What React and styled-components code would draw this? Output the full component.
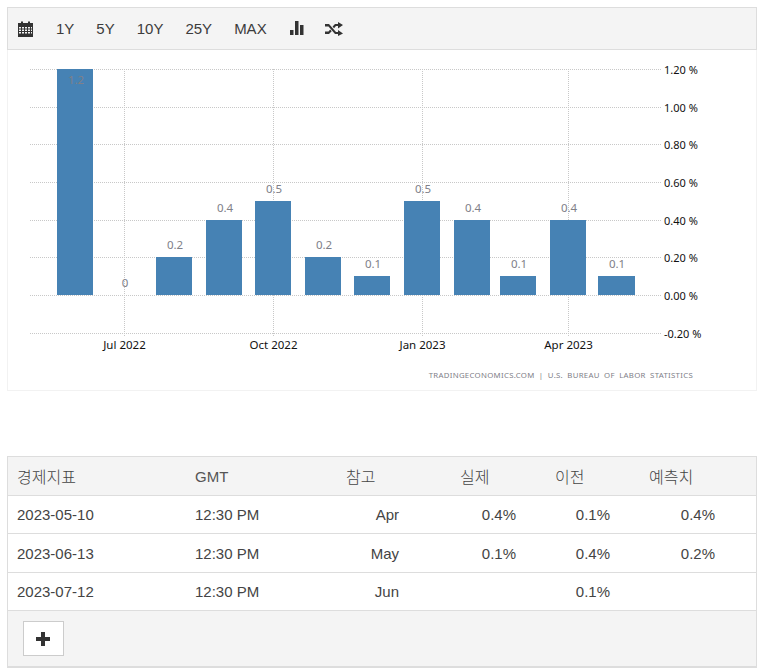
import React from "react";
import styled, { createGlobalStyle } from "styled-components";

const Global = createGlobalStyle`
  * { box-sizing: border-box; }
  html, body { margin: 0; padding: 0; background: #fff; }
  body {
    font-family: "Liberation Sans", "Noto Sans CJK KR", Arial, sans-serif;
    color: #333;
  }
`;

const Page = styled.div`
  width: 757px;
  padding: 7px 0 0 7px;
`;

const Toolbar = styled.div`
  display: flex;
  align-items: center;
  height: 43px;
  border: 1px solid #ddd;
  background: #f4f4f4;
  padding-left: 10px;
`;

const IconButton = styled.span`
  display: inline-flex;
  align-items: center;
  margin-right: ${(p) => p.$gap || 0}px;
  color: #333;
`;

const RangeButton = styled.span`
  font-size: 15px;
  color: #3c3c3c;
  margin-right: ${(p) => p.$gap}px;
`;

const ChartPanel = styled.div`
  height: 341px;
  border: 1px solid #f2f2f2;
  border-top: 0;
  margin-bottom: 65px;
`;

const ChartSvg = styled.svg`
  display: block;
  text {
    font-family: "Noto Sans", sans-serif;
  }
`;

const Table = styled.div`
  border: 1px solid #ddd;
  border-bottom-width: 2px;
`;

const Row = styled.div`
  display: grid;
  grid-template-columns: 178px 151px 114px 95px 94px 1fr;
  align-items: center;
  height: ${(p) => p.$h}px;
  padding-left: 9px;
  border-bottom: 1px solid #ddd;
  background: ${(p) => (p.$head ? "#f4f4f4" : "#fff")};
  font-size: 15px;
  color: #444;
`;

const Cell = styled.span`
  text-align: ${(p) => (p.$pr ? "right" : "left")};
  padding-right: ${(p) => p.$pr || 0}px;
`;

const Head = styled.span`
  font-size: 16px;
  font-family: "Noto Sans CJK KR", "Liberation Sans", sans-serif;
  font-weight: 300;
`;

const LatinHead = styled.span`
  font-size: 15px;
  color: #555;
`;

const Footer = styled.div`
  height: 55px;
  display: flex;
  align-items: center;
  padding-left: 15px;
  background: #f4f4f4;
`;

const PlusButton = styled.button`
  width: 41px;
  height: 35px;
  padding: 0 2px 0 0;
  display: flex;
  align-items: center;
  justify-content: center;
  background: #fff;
  border: 1px solid #ccc;
`;

const bars = [
  { x: 57, v: 1.2, label: "1.2" },
  { x: 106, v: 0, label: "0" },
  { x: 156, v: 0.2, label: "0.2" },
  { x: 206, v: 0.4, label: "0.4" },
  { x: 255, v: 0.5, label: "0.5" },
  { x: 305, v: 0.2, label: "0.2" },
  { x: 354, v: 0.1, label: "0.1" },
  { x: 404, v: 0.5, label: "0.5" },
  { x: 454, v: 0.4, label: "0.4" },
  { x: 500, v: 0.1, label: "0.1" },
  { x: 550, v: 0.4, label: "0.4" },
  { x: 598, v: 0.1, label: "0.1", w: 37 },
];

const ticks = [
  ["1.20 %", 69.5],
  ["1.00 %", 107.5],
  ["0.80 %", 144.5],
  ["0.60 %", 182.5],
  ["0.40 %", 220.5],
  ["0.20 %", 257.5],
  ["0.00 %", 295.5],
  ["-0.20 %", 333.5],
];

const months = [
  ["Jul 2022", 124.5],
  ["Oct 2022", 273.5],
  ["Jan 2023", 422.5],
  ["Apr 2023", 568.5],
];

const rows = [
  ["2023-05-10", "12:30 PM", "Apr", "0.4%", "0.1%", "0.4%"],
  ["2023-06-13", "12:30 PM", "May", "0.1%", "0.4%", "0.2%"],
  ["2023-07-12", "12:30 PM", "Jun", "", "0.1%", ""],
];

const Chart = () => (
  <ChartSvg width="748" height="340" viewBox="8 50 748 340">
    {ticks.map(([label, y]) => (
      <g key={label}>
        <line x1="30" x2="661" y1={y} y2={y} stroke="#c8c8c8" strokeDasharray="1 1" />
        <text x="664" y={y + 4} fontSize="11" fill="#111">{label}</text>
      </g>
    ))}
    {months.map(([label, x]) => (
      <g key={label}>
        <line x1={x} x2={x} y1="69" y2="337" stroke="#c8c8c8" strokeDasharray="1 1" />
        <text x={x} y="349" fontSize="11.5" fill="#111" textAnchor="middle">{label}</text>
      </g>
    ))}
    {bars.map((b) => {
      const top = Math.round(295 - b.v * 188.5);
      return (
        <g key={b.x}>
          <rect x={b.x} y={top} width={b.w || 36} height={295 - top} fill="#4682b4" />
          <text
            x={b.x + 19}
            y={b.v === 1.2 ? 84 : top - 8}
            fontSize="11.5"
            fill="#808088"
            textAnchor="middle"
          >
            {b.label}
          </text>
        </g>
      );
    })}
    <text x="693" y="378" fontSize="7.8" fill="#808088" textAnchor="end" letterSpacing="0.3" wordSpacing="2">
      TRADINGECONOMICS.COM | U.S. BUREAU OF LABOR STATISTICS
    </text>
  </ChartSvg>
);

const CalendarIcon = () => (
  <svg width="15" height="16" viewBox="0 0 15 16" fill="#333">
    <path d="M0 2h3V0.5h2V2h5V0.5h2V2h3v14H0z" />
    <path
      fill="#f4f4f4"
      d="M1 6h2v1.5H1zM4 6h2v1.5H4zM7 6h2v1.5H7zM10 6h2v1.5h-2zM13 6h1v1.5h-1zM1 8.5h2V10H1zM4 8.5h2V10H4zM7 8.5h2V10H7zM10 8.5h2V10h-2zM13 8.5h1V10h-1zM1 11h2v1.5H1zM4 11h2v1.5H4zM7 11h2v1.5H7zM10 11h2v1.5h-2zM13 11h1v1.5h-1z"
    />
  </svg>
);

const BarsIcon = () => (
  <svg width="14" height="15" viewBox="0 0 14 15" fill="#333">
    <path d="M0 9h3.5v5H0zM5 0h3.5v14H5zM10 4h3.5v10H10z" />
  </svg>
);

const RandomIcon = () => (
  <svg width="18" height="14" viewBox="0 0 18 14" fill="#333">
    <path d="M0 2h4l7 8h2V8l5 3.5L13 14v-2h-3L3.5 4.5H0zM0 9.5h3.5l1.7-2 1.5 1.7L4 12H0zM10 2h3V0l5 3-5 3.5V4h-2L9 6.2 7.6 4.6z" />
  </svg>
);

const PlusIcon = () => (
  <svg width="14" height="14" viewBox="0 0 14 14" fill="#333">
    <path d="M5 0h4v5h5v4H9v5H5V9H0V5h5z" />
  </svg>
);

const App = () => (
  <Page>
    <Global />
    <Toolbar>
      <IconButton $gap={23}><CalendarIcon /></IconButton>
      <RangeButton $gap={22}>1Y</RangeButton>
      <RangeButton $gap={22}>5Y</RangeButton>
      <RangeButton $gap={22}>10Y</RangeButton>
      <RangeButton $gap={22}>25Y</RangeButton>
      <RangeButton $gap={23}>MAX</RangeButton>
      <IconButton $gap={21}><BarsIcon /></IconButton>
      <IconButton><RandomIcon /></IconButton>
    </Toolbar>
    <ChartPanel>
      <Chart />
    </ChartPanel>
    <Table>
      <Row $head $h={39}>
        <Head>경제지표</Head>
        <LatinHead>GMT</LatinHead>
        <Head>참고</Head>
        <Head>실제</Head>
        <Head>이전</Head>
        <Head>예측치</Head>
      </Row>
      {rows.map((r, i) => (
        <Row key={r[0]} $h={i === 1 ? 39 : 38}>
          <Cell>{r[0]}</Cell>
          <Cell>{r[1]}</Cell>
          <Cell $pr={61}>{r[2]}</Cell>
          <Cell $pr={39}>{r[3]}</Cell>
          <Cell $pr={39}>{r[4]}</Cell>
          <Cell $pr={41}>{r[5]}</Cell>
        </Row>
      ))}
      <Footer>
        <PlusButton><PlusIcon /></PlusButton>
      </Footer>
    </Table>
  </Page>
);

export default App;
